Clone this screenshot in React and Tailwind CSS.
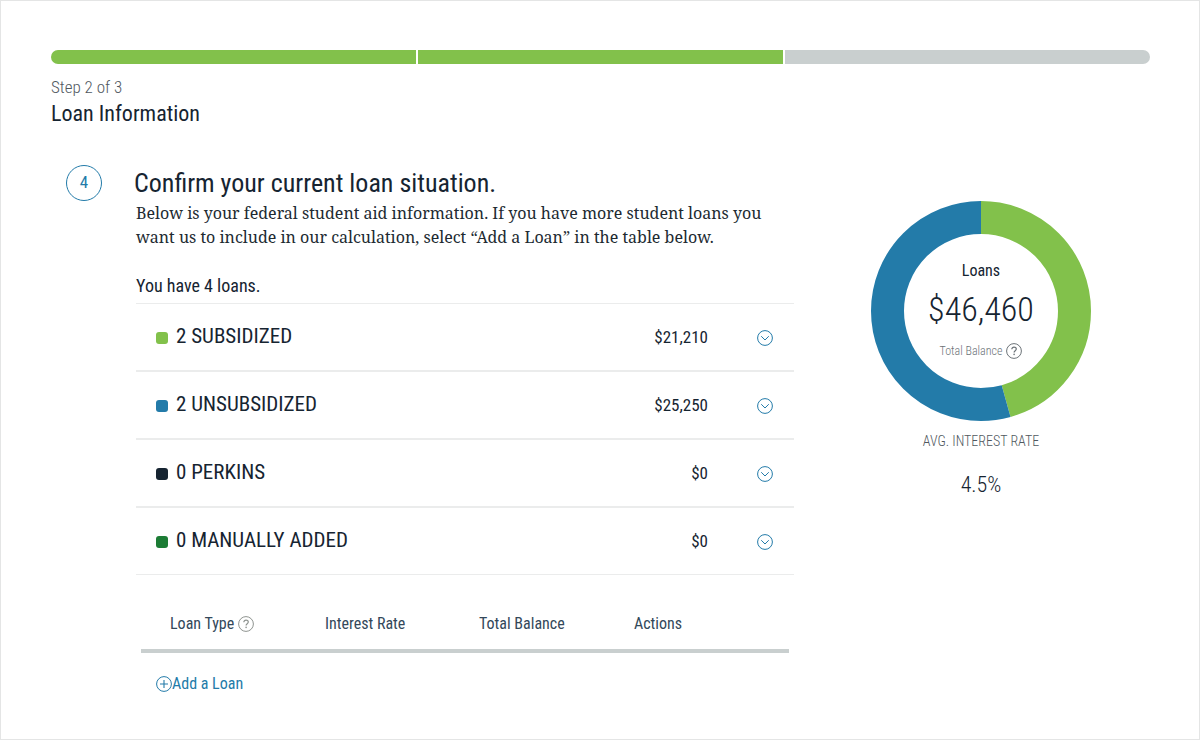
import React from "react";

const loanGroups = [
    { count: 2, name: "SUBSIDIZED", amount: "$21,210", swatch: "bg-[#82c14b]" },
    { count: 2, name: "UNSUBSIDIZED", amount: "$25,250", swatch: "bg-[#237ba9]" },
    { count: 0, name: "PERKINS", amount: "$0", swatch: "bg-[#162431]" },
    { count: 0, name: "MANUALLY ADDED", amount: "$0", swatch: "bg-[#1c7c35]" },
];

const ChevronIcon = () => (
    <svg className="w-4 h-4" viewBox="0 0 16 16" fill="none" stroke="currentColor" aria-hidden="true">
        <circle cx="8" cy="8" r="7.4" />
        <path d="M4.5 6.5L8 10l3.5-3.5" strokeLinecap="round" />
    </svg>
);

const HelpIcon = () => (
    <svg className="w-4 h-4" viewBox="0 0 16 16" fill="none" stroke="currentColor" aria-hidden="true">
        <circle cx="8" cy="8" r="7.4" />
        <path d="M5.8 6.2C5.8 4.8 6.8 4.1 8 4.1s2.3.8 2.3 2c0 1.6-2.2 1.6-2.2 3.3" strokeWidth="1.2" />
        <circle cx="8.1" cy="11.4" r="0.8" fill="currentColor" stroke="none" />
    </svg>
);

const PlusIcon = () => (
    <svg className="w-4 h-4" viewBox="0 0 16 16" fill="none" stroke="currentColor" aria-hidden="true">
        <circle cx="8" cy="8" r="7.4" />
        <path d="M8 4v8M4 8h8" strokeWidth="1.1" />
    </svg>
);

const ProgressBar = () => (
    <div className="flex gap-0.5 h-3.5 rounded-full overflow-hidden" role="progressbar" aria-label="Step 2 of 3" aria-valuemin="0" aria-valuemax="3" aria-valuenow="2">
        <div className="flex-1 bg-[#82c14b]"></div>
        <div className="flex-1 bg-[#82c14b]"></div>
        <div className="flex-1 bg-[#c9cfcf]"></div>
    </div>
);

const LoanRow = ({ loan }) => (
    <li className="flex items-center h-[68px] pl-5 pr-[21px] border-b-2 border-[#ebecec] last:h-[67px] last:border-b">
        <span className={`w-3 h-3 mt-0.5 rounded-[3px] ${loan.swatch}`}></span>
        <span className="ml-2 text-[21px]">{loan.count} {loan.name}</span>
        <span className="ml-auto mr-[49px] mt-0.5 text-[17px]">{loan.amount}</span>
        <button className="mt-0.5 text-[#237ba9]" aria-label={`Show ${loan.name} loans`}>
            <ChevronIcon />
        </button>
    </li>
);

const BalanceChart = () => (
    <div className="grid place-items-center">
        <svg className="col-start-1 row-start-1 w-full" viewBox="0 0 220 220" fill="none" strokeWidth="33" aria-hidden="true">
            {/* Subsidized share first, the rest of the ring is unsubsidized */}
            <circle cx="110" cy="110" r="93.5" stroke="#82c14b" pathLength="46460" strokeDasharray="21210 25250" transform="rotate(-90 110 110)" />
            <circle cx="110" cy="110" r="93.5" stroke="#237ba9" pathLength="46460" strokeDasharray="25250 21210" strokeDashoffset="-21210" transform="rotate(-90 110 110)" />
        </svg>
        <div className="col-start-1 row-start-1 flex flex-col items-center">
            <h2 className="text-[16px] leading-5">Loans</h2>
            <p className="mt-2 text-[34px] leading-10 font-light">$46,460</p>
            <div className="flex items-center gap-1 mt-3 text-[#6c7378]">
                <span className="text-[12px] leading-5 font-light">Total Balance</span>
                <button aria-label="About total balance"><HelpIcon /></button>
            </div>
        </div>
    </div>
);

const App = () => {
    return (
        <div className="min-h-screen border border-[#e4e5e5] bg-white pl-[50px] pr-[49px] pt-[49px] text-[#162431] font-['Roboto_Condensed','Liberation_Sans',sans-serif]">
            <header>
                <ProgressBar />
                <p className="mt-[11px] text-[17px] leading-6 font-light text-[#50585e]">Step 2 of 3</p>
                <h1 className="mt-px text-[22px] leading-7">Loan Information</h1>
            </header>

            <main className="flex mt-[35px] pl-[15px]">
                <div className="flex shrink-0 items-center justify-center w-9 h-9 mt-0.5 rounded-full border border-[#237ba9] text-[17px] text-[#237ba9]">4</div>

                <section className="flex-1 ml-8">
                    <h2 className="text-[26px] leading-9 pt-0.5">Confirm your current loan situation.</h2>
                    <div className="pl-0.5">
                        <p className="font-['Noto_Serif',serif] text-[16px] leading-6 text-[#212a31]">
                            Below is your federal student aid information. If you have more student loans you want us to include in our calculation, select “Add a Loan” in the table below.
                        </p>
                        <h3 className="mt-[25px] text-[18px] leading-6">You have 4 loans.</h3>
                        <ul className="mt-[5px] border-t border-[#ebecec]">
                            {loanGroups.map((loan) => (
                                <LoanRow key={loan.name} loan={loan} />
                            ))}
                        </ul>

                        <div className="mt-[37px] mx-[5px]">
                            <table className="w-full table-fixed text-left text-[16px] leading-6 text-[#33485a]">
                                <thead>
                                    <tr className="border-b-4 border-[#c9cfcf]">
                                        <th className="pl-[29px] pb-[13px] font-normal">
                                            <span className="flex items-center gap-1">
                                                Loan Type
                                                <button className="text-[#8f9490]" aria-label="About loan types"><HelpIcon /></button>
                                            </span>
                                        </th>
                                        <th className="pl-[22px] pb-[13px] font-normal">Interest Rate</th>
                                        <th className="pl-[14px] pb-[13px] font-normal">Total Balance</th>
                                        <th className="pl-[7px] pb-[13px] font-normal">Actions</th>
                                    </tr>
                                </thead>
                            </table>
                            <button className="flex items-center mt-[19px] ml-[15px] text-[16px] leading-6 text-[#237ba9]">
                                <PlusIcon />
                                Add a Loan
                            </button>
                        </div>
                    </div>
                </section>

                <aside className="shrink-0 w-[220px] ml-[77px] mr-[59px] mt-[38px] text-center">
                    <BalanceChart />
                    <p className="mt-2 text-[14px] leading-6 font-light text-[#50585e]">AVG. INTEREST RATE</p>
                    <p className="mt-4 text-[22px] leading-8 font-light">4.5%</p>
                </aside>
            </main>
        </div>
    );
};

export default App;
